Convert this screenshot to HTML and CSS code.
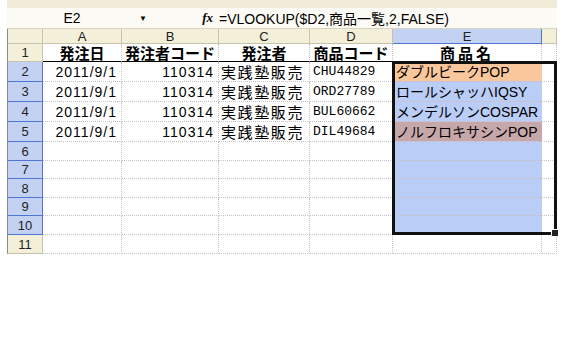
FILE: index.html
```html
<!DOCTYPE html>
<html lang="ja">
<head>
<meta charset="utf-8">
<link rel="stylesheet" href="styles.css">
</head>
<body>
<div class="sheet">
  <div class="topband"></div>
  <div class="fbar">
    <div class="namebox">E2</div>
    <div class="dd">&#9660;</div>
    <div class="fx">fx</div>
    <div class="formula">=VLOOKUP($D2,商品一覧,2,FALSE)</div>
  </div>
  <div class="grid">
    <div class="ch corner"></div>
    <div class="ch">A</div>
    <div class="ch">B</div>
    <div class="ch">C</div>
    <div class="ch">D</div>
    <div class="ch sel">E</div>
    <div class="ch"></div>

    <div class="rh">1</div>
    <div class="c h1">発注日</div>
    <div class="c h1">発注者コード</div>
    <div class="c h1">発注者</div>
    <div class="c h1">商品コード</div>
    <div class="c h1 wide">商品名</div>
    <div class="c"></div>

    <div class="rh sel">2</div>
    <div class="c num">2011/9/1</div>
    <div class="c num">110314</div>
    <div class="c jp">実践塾販売</div>
    <div class="c code">CHU44829</div>
    <div class="c e peach">ダブルビークPOP</div>
    <div class="c"></div>

    <div class="rh sel">3</div>
    <div class="c num">2011/9/1</div>
    <div class="c num">110314</div>
    <div class="c jp">実践塾販売</div>
    <div class="c code">ORD27789</div>
    <div class="c e blue">ロールシャッハIQSY</div>
    <div class="c"></div>

    <div class="rh sel">4</div>
    <div class="c num">2011/9/1</div>
    <div class="c num">110314</div>
    <div class="c jp">実践塾販売</div>
    <div class="c code">BUL60662</div>
    <div class="c e blue">メンデルソンCOSPAR</div>
    <div class="c"></div>

    <div class="rh sel">5</div>
    <div class="c num">2011/9/1</div>
    <div class="c num">110314</div>
    <div class="c jp">実践塾販売</div>
    <div class="c code">DIL49684</div>
    <div class="c e rose">ノルフロキサシンPOP</div>
    <div class="c"></div>

    <div class="rh sel">6</div>
    <div class="c"></div><div class="c"></div><div class="c"></div><div class="c"></div>
    <div class="c e blue"></div><div class="c"></div>

    <div class="rh sel">7</div>
    <div class="c"></div><div class="c"></div><div class="c"></div><div class="c"></div>
    <div class="c e blue"></div><div class="c"></div>

    <div class="rh sel">8</div>
    <div class="c"></div><div class="c"></div><div class="c"></div><div class="c"></div>
    <div class="c e blue"></div><div class="c"></div>

    <div class="rh sel">9</div>
    <div class="c"></div><div class="c"></div><div class="c"></div><div class="c"></div>
    <div class="c e blue"></div><div class="c"></div>

    <div class="rh sel">10</div>
    <div class="c"></div><div class="c"></div><div class="c"></div><div class="c"></div>
    <div class="c e blue"></div><div class="c"></div>

    <div class="rh">11</div>
    <div class="c"></div><div class="c"></div><div class="c"></div><div class="c"></div>
    <div class="c"></div><div class="c"></div>

    <div class="selbox"><span class="handle"></span></div>
  </div>
</div>
</body>
</html>
```

FILE: styles.css
```css
html, body {
  margin: 0;
  background: #ffffff;
}
.sheet {
  margin-left: 7px;
  width: 550px;
  font-family: "Liberation Sans", Arial, "Noto Sans CJK JP", sans-serif;
  color: #000;
}
.topband {
  height: 8px;
  background: #efebd6;
}
.fbar {
  height: 21px;
  display: flex;
  align-items: center;
  background: #fbfaf4;
  font-size: 14px;
  border-bottom: 1px solid #d8d4c0;
  box-sizing: border-box;
}
.namebox {
  width: 126px;
  text-align: center;
  padding-left: 4px;
  box-sizing: border-box;
}
.dd {
  width: 20px;
  font-size: 8px;
  text-align: center;
}
.fx {
  width: 66px;
  text-align: right;
  padding-right: 6px;
  box-sizing: border-box;
  font-family: "Liberation Serif", serif;
  font-style: italic;
  font-weight: bold;
  font-size: 13px;
}
.formula {
  white-space: nowrap;
  font-family: "Liberation Sans", "Noto Sans CJK JP", sans-serif;
}
.grid {
  position: relative;
  display: grid;
  grid-template-columns: 36px 79px 97px 91px 83px 149px 15px;
  grid-template-rows: 15px 18px 20px 20px 20px 20px 19px 18px 19px 18px 19px 19px;
}
.ch, .rh {
  background: #f3efd9;
  border-right: 1px solid #c6c2ac;
  border-bottom: 1px solid #c6c2ac;
  box-sizing: border-box;
  font-size: 13px;
  color: #222;
  display: flex;
  align-items: center;
  justify-content: center;
  line-height: 1;
}
.rh {
  border-left: 1px solid #8a8a8a;
}
.corner {
  border-left: 1px solid #8a8a8a;
}
.ch.sel, .rh.sel {
  background: #c3d2f3;
  border-color: #4e76d4;
}
.rh.sel {
  border-left-color: #8a8a8a;
}
.c {
  border-right: 1px dotted #c4c4c4;
  border-bottom: 1px dotted #c4c4c4;
  box-sizing: border-box;
  white-space: nowrap;
  display: flex;
  align-items: center;
  font-size: 14px;
  line-height: 1;
  min-width: 0;
}
.h1 {
  justify-content: center;
  font-family: "Noto Sans CJK JP", sans-serif;
  font-weight: bold;
  font-size: 15px;
  border-bottom: 1px solid #000;
}
.wide {
  letter-spacing: 3px;
}
.num {
  justify-content: flex-end;
  padding-right: 4px;
  font-size: 14px;
  letter-spacing: 1px;
}
.jp {
  font-family: "Noto Sans CJK JP", sans-serif;
  font-size: 15px;
  letter-spacing: 1.6px;
  padding-left: 2px;
}
.code {
  font-family: "Liberation Mono", "DejaVu Sans Mono", monospace;
  font-size: 13px;
  padding-left: 3px;
}
.e {
  font-family: "Liberation Sans", "Noto Sans CJK JP", sans-serif;
  font-size: 14px;
  padding-left: 3px;
  border-right: none;
  border-bottom: 1px solid #c9c3d8;
}
.peach { background: #fac79c; }
.blue { background: #b9cdf6; }
.rose { background: #c6a8ab; }
.selbox {
  grid-column: 6;
  grid-row: 3 / 12;
  position: absolute;
  top: -1px;
  left: -1px;
  right: 0;
  bottom: 0;
  border: 3px solid #111;
}
.handle {
  position: absolute;
  right: -5px;
  bottom: -5px;
  width: 6px;
  height: 6px;
  background: #222;
  border: 1px solid #fff;
}
```
